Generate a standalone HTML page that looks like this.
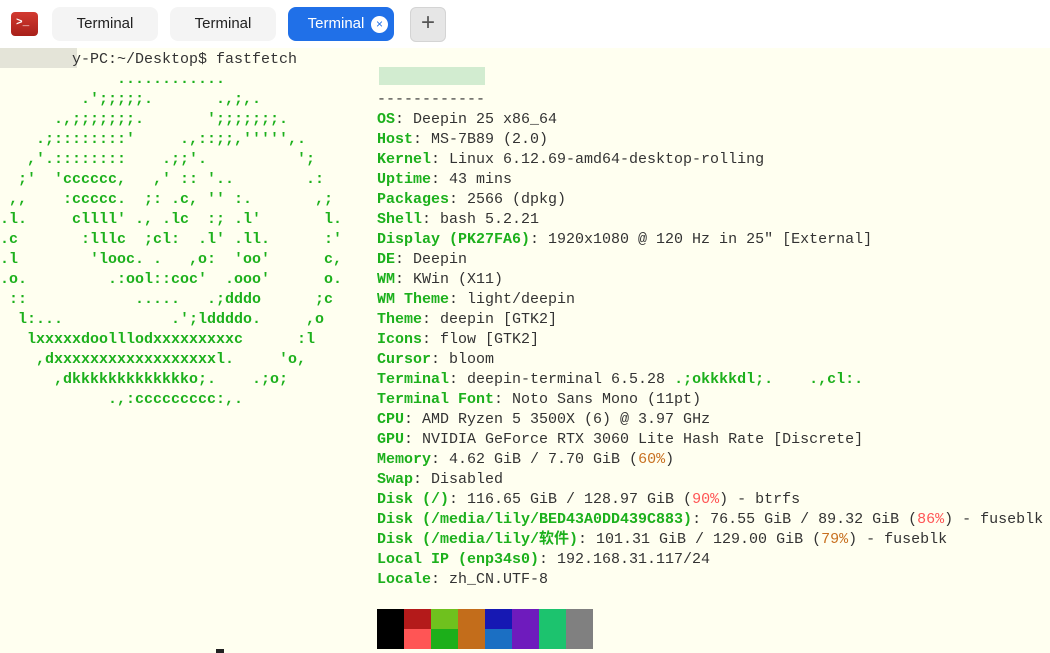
<!DOCTYPE html>
<html><head><meta charset="utf-8"><style>
body{margin:0;width:1050px;height:653px;overflow:hidden;background:#fffff0;font-family:"Liberation Sans",sans-serif;position:relative}
.top{position:absolute;left:0;top:0;width:1050px;height:48px;background:#fff}
.icon{position:absolute;left:11px;top:12px;width:27px;height:24px;border-radius:4px;background:linear-gradient(#d23a30,#a8201a);color:#fff;font:bold 11px "Liberation Mono",monospace;line-height:22px;padding-left:5px;box-sizing:border-box}
.tab{position:absolute;top:7px;height:34px;border-radius:8px;background:#f4f4f4;font-size:15px;color:#222;text-align:center;line-height:34px}
.tab.a{background:#2070e8;color:#fff}
.x{position:absolute;left:83px;top:9px;width:17px;height:17px;border-radius:50%;background:#fff;color:#2070e8;font-size:12px;line-height:16px;text-align:center}
.plus{position:absolute;left:410px;top:7px;width:36px;height:35px;border-radius:6px;background:#e6e6e6;border:1px solid #d4d4d4;box-sizing:border-box;text-align:center;font-size:24px;line-height:30px;color:#555}
pre{margin:0;position:absolute;font:15px/20px "Liberation Mono","Noto Sans CJK SC",monospace;color:#333;letter-spacing:0}
.g{color:#1cb01c;font-weight:bold}
.art{color:#1cb01c;font-weight:bold}
.r{color:#ff5555}.o{color:#c87020}
.sw{position:absolute;width:27px;height:20px}
</style></head><body>
<div class="top"></div>
<div class="icon">&gt;_</div>
<div class="tab" style="left:52px;width:106px">Terminal</div>
<div class="tab" style="left:170px;width:106px">Terminal</div>
<div class="tab a" style="left:288px;width:106px"><span style="position:relative;left:-5px">Terminal</span><div class="x">×</div></div>
<div class="plus">+</div>
<div style="position:absolute;left:0;top:48px;width:77px;height:20px;background:#e4e4d8"></div>
<pre style="left:0;top:50px">        y-PC:~/Desktop$ fastfetch</pre>
<pre class="art" style="left:0;top:70px">             ............
         .';;;;;.       .,;,.
      .,;;;;;;;.       ';;;;;;;.
    .;::::::::'     .,::;;,''''',.
   ,'.::::::::    .;;'.          ';
  ;'  'cccccc,   ,' :: '..        .:
 ,,    :ccccc.  ;: .c, '' :.       ,;
.l.     cllll' ., .lc  :; .l'       l.
.c       :lllc  ;cl:  .l' .ll.      :'
.l        'looc. .   ,o:  'oo'      c,
.o.         .:ool::coc'  .ooo'      o.
 ::            .....   .;dddo      ;c
  l:...            .';lddddo.     ,o
   lxxxxxdoolllodxxxxxxxxxc      :l
    ,dxxxxxxxxxxxxxxxxxxl.     'o,
      ,dkkkkkkkkkkkkko;.    .;o;
            .,:ccccccccc:,.</pre>
<div style="position:absolute;left:379px;top:67px;width:106px;height:18px;background:#d2ecd0"></div>
<pre style="left:377px;top:90px">------------
<span class="g">OS</span>: Deepin 25 x86_64
<span class="g">Host</span>: MS-7B89 (2.0)
<span class="g">Kernel</span>: Linux 6.12.69-amd64-desktop-rolling
<span class="g">Uptime</span>: 43 mins
<span class="g">Packages</span>: 2566 (dpkg)
<span class="g">Shell</span>: bash 5.2.21
<span class="g">Display (PK27FA6)</span>: 1920x1080 @ 120 Hz in 25" [External]
<span class="g">DE</span>: Deepin
<span class="g">WM</span>: KWin (X11)
<span class="g">WM Theme</span>: light/deepin
<span class="g">Theme</span>: deepin [GTK2]
<span class="g">Icons</span>: flow [GTK2]
<span class="g">Cursor</span>: bloom
<span class="g">Terminal</span>: deepin-terminal 6.5.28 <span class="art">.;okkkkdl;.    .,cl:.</span>
<span class="g">Terminal Font</span>: Noto Sans Mono (11pt)
<span class="g">CPU</span>: AMD Ryzen 5 3500X (6) @ 3.97 GHz
<span class="g">GPU</span>: NVIDIA GeForce RTX 3060 Lite Hash Rate [Discrete]
<span class="g">Memory</span>: 4.62 GiB / 7.70 GiB (<span class="o">60%</span>)
<span class="g">Swap</span>: Disabled
<span class="g">Disk (/)</span>: 116.65 GiB / 128.97 GiB (<span class="r">90%</span>) - btrfs
<span class="g">Disk (/media/lily/BED43A0DD439C883)</span>: 76.55 GiB / 89.32 GiB (<span class="r">86%</span>) - fuseblk
<span class="g">Disk (/media/lily/软件)</span>: 101.31 GiB / 129.00 GiB (<span class="o">79%</span>) - fuseblk
<span class="g">Local IP (enp34s0)</span>: 192.168.31.117/24
<span class="g">Locale</span>: zh_CN.UTF-8</pre>
<div class="sw" style="left:377px;top:609px;height:40px;background:#000"></div>
<div class="sw" style="left:404px;top:609px;background:#b41a1a"></div>
<div class="sw" style="left:404px;top:629px;background:#ff5555"></div>
<div class="sw" style="left:431px;top:609px;background:#6fc11e"></div>
<div class="sw" style="left:431px;top:629px;background:#1caf1a"></div>
<div class="sw" style="left:458px;top:609px;height:40px;background:#c36d1b"></div>
<div class="sw" style="left:485px;top:609px;background:#1618b3"></div>
<div class="sw" style="left:485px;top:629px;background:#1b6fc3"></div>
<div class="sw" style="left:512px;top:609px;height:40px;background:#6e1bbd"></div>
<div class="sw" style="left:539px;top:609px;height:40px;background:#1cc36e"></div>
<div class="sw" style="left:566px;top:609px;height:40px;background:#808080"></div>
<div style="position:absolute;left:216px;top:649px;width:8px;height:4px;background:#222"></div>
</body></html>
